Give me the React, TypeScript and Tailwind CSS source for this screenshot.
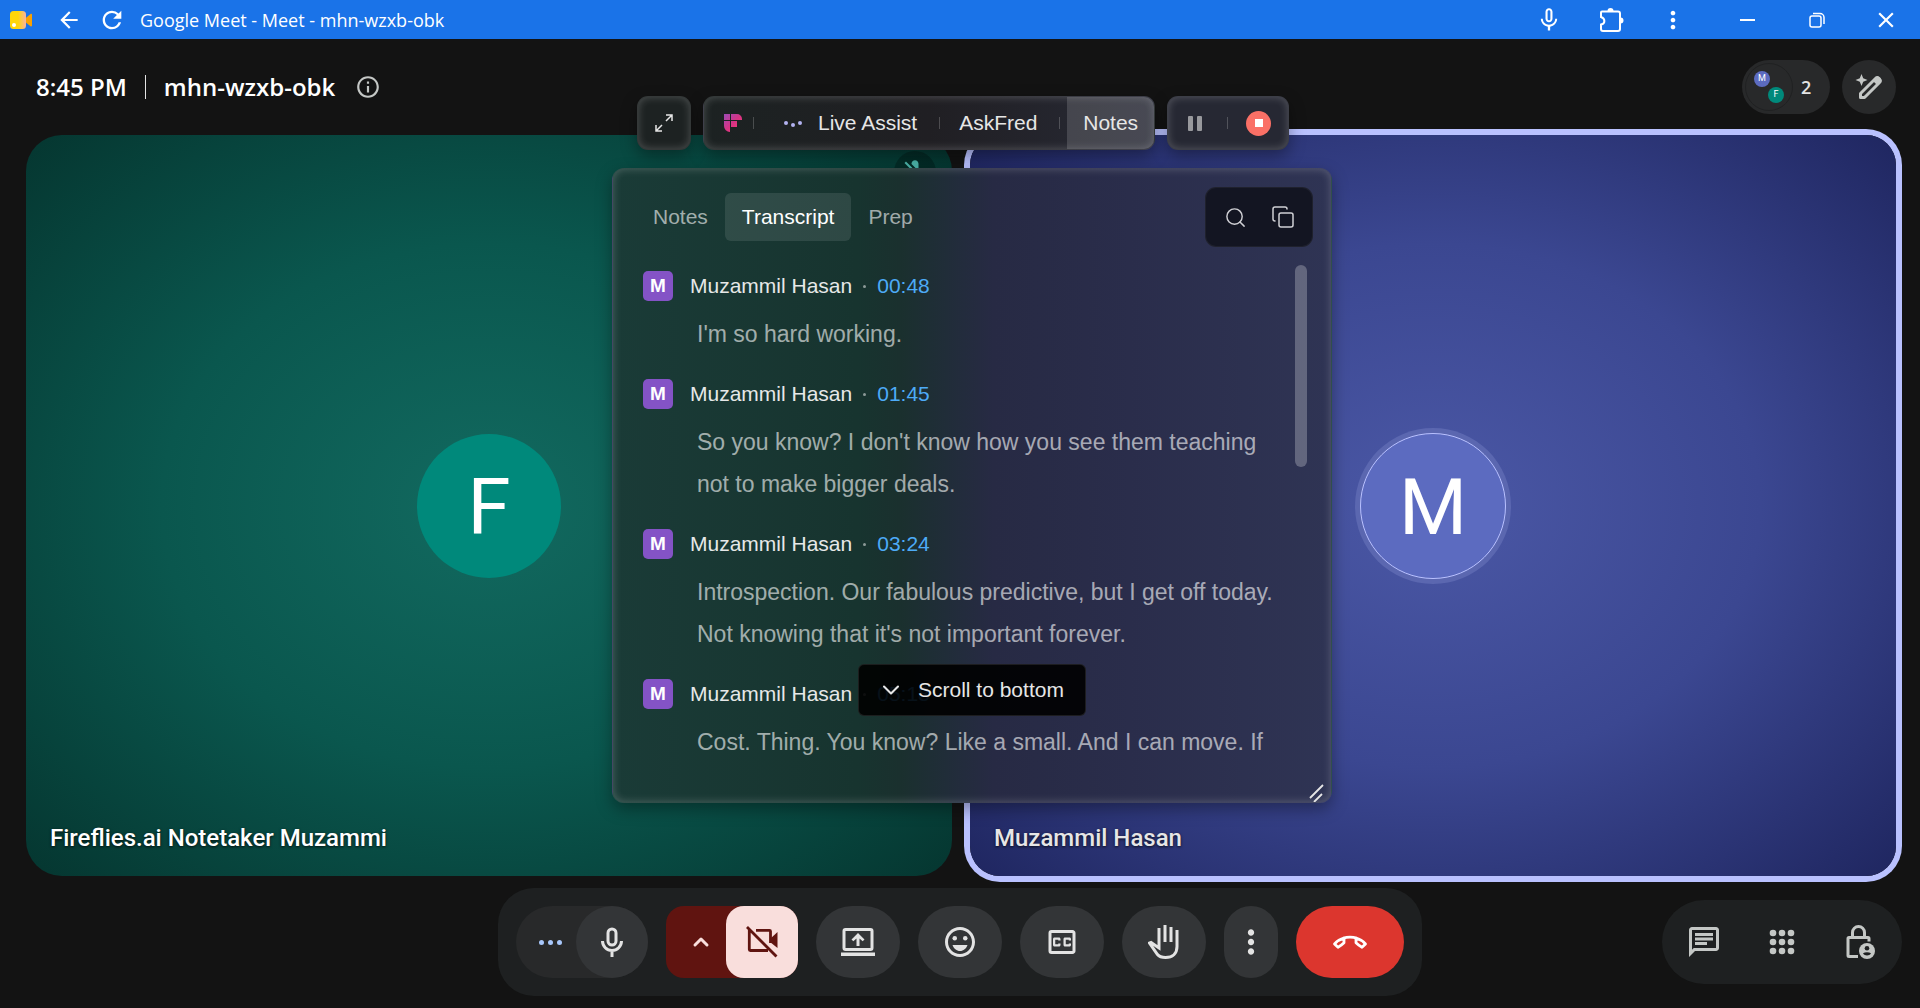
import type { ReactNode } from 'react'
import {
  MdArrowBack,
  MdClose,
  MdMicNone,
  MdMicOff,
  MdMoreVert,
  MdOutlineChat,
  MdOutlineClosedCaption,
  MdOutlineEmojiEmotions,
  MdOutlineInfo,
  MdRefresh,
} from 'react-icons/md'
import { ChevronDown, ChevronUp, Copy, Search } from 'lucide-react'

const messages = [
  { time: '00:48', text: "I'm so hard working." },
  { time: '01:45', text: "So you know? I don't know how you see them teaching not to make bigger deals." },
  {
    time: '03:24',
    text: "Introspection. Our fabulous predictive, but I get off today. Not knowing that it's not important forever.",
  },
  { time: '05:18', text: 'Cost. Thing. You know? Like a small. And I can move. If' },
]

const glass =
  'border border-white/10 shadow-[0_6px_16px_rgba(0,0,0,0.35),inset_0_0_9px_rgba(255,255,255,0.22)]'

function MeetLogo() {
  return (
    <svg viewBox="0 0 22 18" className="h-[18px] w-[22px]">
      <defs>
        <linearGradient id="cam" x1="0" x2="1">
          <stop offset="0.5" stopColor="#ffd60a" />
          <stop offset="1" stopColor="#f9b3a0" />
        </linearGradient>
      </defs>
      <path d="M14 8.5 20.5 3c.6-.5 1.5-.1 1.500.7v10.800c0 .8-.9 1.200-1.500.7L14 10z" fill="#f9a100" />
      <rect width="16" height="18" rx="3.500" fill="url(#cam)" />
      <circle cx="4" cy="14" r="2" fill="#fff" />
    </svg>
  )
}

function ExtensionIcon() {
  return (
    <svg viewBox="0 0 26 26" className="size-[26px]" fill="none" stroke="currentColor" strokeWidth="2">
      <path d="M4 4.500h16a2 2 0 0 1 2 2V22a2 2 0 0 1-2 2H5a2 2 0 0 1-2-2v-4.500c4.500-1 4.500-6 0-7.500V5.500a1 1 0 0 1 1-1z" />
      <path d="M9.500 4a3 3 0 0 1 6 0zM22.500 10.500a3 3 0 0 1 0 6z" fill="currentColor" stroke="none" />
    </svg>
  )
}

function RestoreIcon() {
  return (
    <svg viewBox="0 0 16 16" className="size-4" fill="none" stroke="currentColor" strokeWidth="1.500">
      <rect x="1" y="4" width="11" height="11" rx="2" />
      <path d="M4 1.500h7a4 4 0 0 1 4 4V12" />
    </svg>
  )
}

function MagicPencilIcon() {
  return (
    <svg viewBox="0 0 28 28" className="size-7" fill="currentColor">
      <path d="M6.500 1 8.200 5.300 12.500 7l-4.300 1.700L6.500 13l-1.700-4.300L.5 7l4.300-1.700z" />
      <path
        d="M5.500 24.500v-4L20.500 5.500a2.500 2.500 0 0 1 3.500 0l.5.5a2.500 2.500 0 0 1 0 3.500L9.500 24.500z"
        fill="none"
        stroke="currentColor"
        strokeWidth="3"
        strokeLinejoin="round"
      />
      <path d="m17.500 7.500 5 5 3-3V5l-3-1.500z" />
    </svg>
  )
}

function FirefliesLogo() {
  return (
    <svg viewBox="0 0 18 18" className="size-[18px]">
      <defs>
        <linearGradient id="ff" x1="0" y1="0" x2="1" y2="1">
          <stop stopColor="#9b4bb5" />
          <stop offset="0.5" stopColor="#d63384" />
          <stop offset="1" stopColor="#ff3d73" />
        </linearGradient>
      </defs>
      <path d="M0 0h6v6H0zM7 0h6a5 5 0 0 1 5 5v1H7zM0 7h6v11a6 6 0 0 1-6-6zM7 7h6v6H7z" fill="url(#ff)" />
    </svg>
  )
}

function ExpandIcon() {
  return (
    <svg viewBox="0 0 18 18" className="size-[18px]" fill="none" stroke="#e6e6e6" strokeWidth="1.500">
      <path d="M11 1h6v6M17 1l-6 6M1 11v6h6M1 17l6-6" />
    </svg>
  )
}

function MicIcon() {
  return (
    <svg viewBox="0 0 24 30" className="h-[30px] w-6" fill="none" stroke="currentColor" strokeWidth="3">
      <rect x="8" y="2" width="8" height="16" rx="4" />
      <path d="M2.500 14a9.500 9.500 0 0 0 19 0M12 23.500V30" />
    </svg>
  )
}

function CameraOffIcon() {
  return (
    <svg viewBox="0 0 32 32" className="size-8" fill="none" stroke="currentColor" strokeWidth="2.800">
      <path d="M1 1l29.500 29.500M10 4.300h13.500a1 1 0 0 1 1 1V17M3.300 4v19.500a1 1 0 0 0 1 1H22" />
      <path d="M24 13l7.500-7v16L24 16z" fill="currentColor" stroke="none" />
    </svg>
  )
}

function HandIcon() {
  return (
    <svg viewBox="0 0 32 34" className="h-[34px] w-8" fill="none" stroke="currentColor" strokeWidth="3">
      <path d="M11 3v20l-8-5.500-1.500.5 8 11.500c2 2.500 4.500 3 8 3 7 0 11.500-4 11.500-11V5M17 0v17M23 2v15" />
    </svg>
  )
}

function PresentIcon() {
  return (
    <svg viewBox="0 0 36 30" className="h-[30px] w-9" fill="currentColor">
      <path
        fillRule="evenodd"
        d="M5.500 1h25a3 3 0 0 1 3 3v17a3 3 0 0 1-3 3h-25a3 3 0 0 1-3-3V4a3 3 0 0 1 3-3zM5.500 4v17h25V4z"
      />
      <path d="M1 25.500h34V29H1z" />
      <path d="m18 6 6.500 6.500-1.800 1.800-3.200-2.800V19h-3v-7.500l-3.200 2.800-1.800-1.800z" />
    </svg>
  )
}

function HangUpIcon() {
  return (
    <svg viewBox="0 0 36 16" className="h-4 w-9" fill="none" stroke="#fff" strokeWidth="2.800" strokeLinejoin="round">
      <path d="M12 4.200C9 5 5.500 6.800 2.500 10L6 13.300c2.500-1.300 4.500-3 6-4.500zM24 4.200c3 .8 6.500 2.600 9.500 5.800L30 13.300c-2.500-1.300-4.500-3-6-4.500z" />
      <path d="M11 4.300c4.500-1.500 9.500-1.500 14 0" />
    </svg>
  )
}

function AppsIcon() {
  return (
    <svg viewBox="0 0 26 26" className="size-[26px]" fill="currentColor">
      {[4, 13, 22].map((y) => [4, 13, 22].map((x) => <circle key={`${x}-${y}`} cx={x} cy={y} r="3.300" />))}
    </svg>
  )
}

function LockPersonIcon() {
  return (
    <svg viewBox="0 0 30 34" className="h-[34px] w-[30px]" fill="none" stroke="currentColor" strokeWidth="3">
      <path d="M7.500 12V7.500a6 6 0 0 1 12 0V12" />
      <path d="M24 16.500V13.500a1 1 0 0 0-1-1H4a1 1 0 0 0-1 1v17a1 1 0 0 0 1 1h9" />
      <circle cx="22" cy="26" r="8" fill="currentColor" stroke="none" />
      <circle cx="22" cy="23.300" r="2.300" fill="#1e2021" stroke="none" />
      <path d="M18 28.300c2.200-1.500 5.800-1.500 8 0-1.500 3-6.500 3-8 0z" fill="#1e2021" stroke="none" />
    </svg>
  )
}

function RoundButton({ label, className = 'w-[84px]', children }: { label: string; className?: string; children: ReactNode }) {
  return (
    <button
      aria-label={label}
      className={`flex h-18 items-center justify-center rounded-[36px] bg-[#333537] text-[#e3e3e3] ${className}`}
    >
      {children}
    </button>
  )
}

function TitleBar() {
  return (
    <header className="flex h-[39px] items-center bg-[#1a73e8] text-white">
      <div className="flex flex-1 items-center pl-[10px]">
        <MeetLogo />
        <button aria-label="Back" className="ml-6">
          <MdArrowBack size={26} />
        </button>
        <button aria-label="Reload" className="ml-4">
          <MdRefresh size={28} />
        </button>
        <h1 className="ml-[14px] font-['Open_Sans',sans-serif] text-[18px] leading-6">Google Meet - Meet - mhn-wzxb-obk</h1>
      </div>
      <div className="mr-[9px] flex *:flex *:w-[62px] *:items-center *:justify-center">
        <button aria-label="Microphone"><MdMicNone size={28} /></button>
        <button aria-label="Extensions"><ExtensionIcon /></button>
        <button aria-label="More"><MdMoreVert size={28} /></button>
      </div>
      <div className="flex *:flex *:w-[69px] *:items-center *:justify-center">
        <button aria-label="Minimize"><span className="h-[2px] w-[15px] bg-white" /></button>
        <button aria-label="Restore"><RestoreIcon /></button>
        <button aria-label="Close"><MdClose size={26} /></button>
      </div>
    </header>
  )
}

function MeetingHeader() {
  return (
    <div className="flex h-24 items-center justify-between pr-6 pl-9 text-white">
      <div className="flex items-center font-['Open_Sans',sans-serif] text-[24px] leading-8 font-semibold">
        <span>8:45 PM</span>
        <span className="mx-[18px] h-6 w-px bg-[#e3e3e3]" />
        <span>mhn-wzxb-obk</span>
        <button aria-label="Meeting details" className="ml-5 text-[#c4c7c5]">
          <MdOutlineInfo size={26} />
        </button>
      </div>
      <div className="flex gap-3">
        <button aria-label="Participants" className="flex h-[54px] w-[88px] items-center rounded-full bg-[#28292a] pl-[3px] text-[#e3e3e3]">
          <span className="flex size-12 flex-col justify-center rounded-full border border-[#202122] px-2 text-[9px] text-white">
            <span className="flex size-4 items-center justify-center rounded-full bg-[#5c6bc0]">M</span>
            <span className="flex size-4 items-center justify-center self-end rounded-full bg-[#00897b]">F</span>
          </span>
          <span className="ml-2 font-['Open_Sans',sans-serif] text-lg font-semibold">2</span>
        </button>
        <button aria-label="Effects" className="flex size-[54px] items-center justify-center rounded-full bg-[#28292a] text-[#c4c7c5]">
          <MagicPencilIcon />
        </button>
      </div>
    </div>
  )
}

function Tiles() {
  return (
    <main className="grid flex-1 grid-cols-2 gap-[18px] pr-6 pl-[26px] text-white">
      <section className="relative flex items-center justify-center rounded-[36px] bg-[radial-gradient(ellipse_farthest-corner_at_center,#126a60_0%,#0a574e_50%,#053630_100%)]">
        <div className="flex size-36 items-center justify-center rounded-full bg-[#00897b] pt-1 text-[78px] leading-none">F</div>
        <div className="absolute top-4 right-4 flex size-[42px] items-center justify-center rounded-full bg-black/25 text-[#4db6ac]">
          <MdMicOff size={28} />
        </div>
        <h2 className="absolute bottom-[22px] left-6 text-[24px] leading-8 font-medium [text-shadow:0_1px_3px_rgba(0,0,0,0.8)]">
          Fireflies.ai Notetaker Muzammi
        </h2>
      </section>
      <section className="relative flex items-center justify-center rounded-[30px] bg-[radial-gradient(ellipse_farthest-corner_at_center,#4b58a6_0%,#3b4791_50%,#1f2660_100%)] ring-6 ring-[#b9c1ff]">
        <div className="flex size-39 items-center justify-center rounded-full bg-[#5b67b0]">
          <div className="flex size-[146px] items-center justify-center rounded-full border border-[#b9c1ff] bg-[#5c6bc0] pt-1 text-[78px] leading-none">
            M
          </div>
        </div>
        <h2 className="absolute bottom-[22px] left-6 text-[24px] leading-8 font-medium text-[#e6e6e6] [text-shadow:0_1px_3px_rgba(0,0,0,0.8)]">
          Muzammil Hasan
        </h2>
      </section>
    </main>
  )
}

function Controls() {
  return (
    <footer className="grid grid-cols-[1fr_auto_1fr] items-center px-[18px] py-3">
      <div />
      <div className="flex gap-[18px] rounded-[36px] bg-[#1e2021] p-[18px]">
        <div className="flex h-18 w-33 rounded-[36px] bg-[#28292a]">
          <button aria-label="Audio settings" className="flex w-15 items-center justify-center gap-1 pl-2 *:size-[5px] *:rounded-full *:bg-[#a8c7fa]">
            <span /><span /><span />
          </button>
          <RoundButton label="Turn off microphone" className="w-18"><MicIcon /></RoundButton>
        </div>
        <div className="flex h-18 w-33 rounded-[18px] bg-[#601410] text-[#f9dedc]">
          <button aria-label="Video settings" className="flex w-15 items-center justify-center pl-[10px]">
            <ChevronUp size={24} strokeWidth={3} />
          </button>
          <button aria-label="Turn on camera" className="flex w-18 items-center justify-center rounded-[18px] bg-[#f9dedc] text-[#601410]">
            <CameraOffIcon />
          </button>
        </div>
        <RoundButton label="Present now"><PresentIcon /></RoundButton>
        <RoundButton label="Send a reaction"><MdOutlineEmojiEmotions size={36} /></RoundButton>
        <RoundButton label="Turn on captions"><MdOutlineClosedCaption size={36} /></RoundButton>
        <RoundButton label="Raise hand"><HandIcon /></RoundButton>
        <RoundButton label="More options" className="w-[54px]"><MdMoreVert size={38} /></RoundButton>
        <button aria-label="Leave call" className="flex h-18 w-27 items-center justify-center rounded-[36px] bg-[#dc362e]">
          <HangUpIcon />
        </button>
      </div>
      <div className="flex h-21 w-60 gap-[6px] justify-self-end rounded-[42px] bg-[#1e2021] p-[6px] text-[#c4c7c5] *:flex *:flex-1 *:items-center *:justify-center">
        <button aria-label="Chat"><MdOutlineChat size={36} /></button>
        <button aria-label="Meeting tools"><AppsIcon /></button>
        <button aria-label="Host controls"><LockPersonIcon /></button>
      </div>
    </footer>
  )
}

function Divider() {
  return <span className="h-3 w-px bg-white/20" />
}

function AssistantToolbar() {
  return (
    <div className="ml-[25px] flex h-[54px] gap-3 text-[#e6e6e6]">
      <button aria-label="Expand" className={`flex w-[54px] items-center justify-center rounded-[11px] bg-[#1d2222] ${glass}`}>
        <ExpandIcon />
      </button>
      <div className={`flex w-[452px] items-center overflow-hidden rounded-[11px] bg-linear-to-r from-[#1c2222] via-[#201f23] to-[#282a36] ${glass}`}>
        <button aria-label="Fireflies" className="pr-[11px] pl-5"><FirefliesLogo /></button>
        <Divider />
        <button className="flex items-center gap-4 pr-[22px] pl-[30px]">
          <span className="flex gap-[3px] *:size-1 *:rounded-full *:bg-[#b3b2f0]">
            <span /><span className="translate-y-[2px]" /><span />
          </span>
          Live Assist
        </button>
        <Divider />
        <button className="pr-[22px] pl-[19px]">AskFred</button>
        <Divider />
        <button className="ml-[7px] flex-1 self-stretch bg-white/15">Notes</button>
      </div>
      <div className={`flex w-[122px] items-center rounded-[11px] bg-[#262833] ${glass}`}>
        <button aria-label="Pause" className="flex gap-1 pr-[25px] pl-5 *:h-[15px] *:w-[5px] *:rounded-[1px] *:bg-[#98999d]">
          <span /><span />
        </button>
        <Divider />
        <button aria-label="Stop" className="ml-[18px] flex size-[25px] items-center justify-center rounded-full bg-[#fa7066]">
          <span className="size-2 bg-white" />
        </button>
      </div>
    </div>
  )
}

function TranscriptPanel() {
  return (
    <div
      className={`relative flex h-[635px] flex-col rounded-xl bg-[linear-gradient(to_right,#1a3b37_0%,#17342f_34%,#1a302e_40%,#272a44_53%,#2a2d4b_72%,#2f3454_100%)] pt-[18px] ${glass}`}
    >
      <div className="flex items-center justify-between pr-[18px] pl-[23px]">
        <nav className="flex text-white/60 *:h-12 *:rounded-md *:px-[17px]">
          <button>Notes</button>
          <button className="bg-white/10 text-white">Transcript</button>
          <button>Prep</button>
        </nav>
        <div className="flex h-15 w-27 items-center justify-center gap-6 rounded-[11px] border border-white/5 bg-[#131522] text-[#d0d0d5]">
          <button aria-label="Search"><Search size={23} strokeWidth={1.5} /></button>
          <button aria-label="Copy"><Copy size={24} strokeWidth={1.5} /></button>
        </div>
      </div>

      <div className="mt-[18px] flex h-[498px] justify-between overflow-hidden pr-6 pl-[30px]">
        <ul className="w-[650px] space-y-6 pt-[6px]">
          {messages.map((m) => (
            <li key={m.time}>
              <div className="flex h-[30px] items-center">
                <span className="flex size-[30px] items-center justify-center rounded-[5px] bg-[#8453c6] text-[19px] font-bold text-white">M</span>
                <span className="ml-[17px] text-[#e6e8e8]">Muzammil Hasan</span>
                <span className="mx-[11px] size-[3px] rounded-full bg-white/50" />
                <span className="text-[#4dabf7]">{m.time}</span>
              </div>
              <p className="mt-3 pl-[54px] text-[23px] leading-[42px] text-white/60">{m.text}</p>
            </li>
          ))}
        </ul>
        <div className="h-[202px] w-3 shrink-0 rounded-full bg-white/25" />
      </div>

      <button className="absolute bottom-[86px] left-1/2 flex h-[52px] w-[228px] -translate-x-1/2 items-center gap-[13px] rounded-md border border-white/10 bg-black/90 pl-[18px] text-[#e6e6e6]">
        <ChevronDown size={28} strokeWidth={1.8} />
        Scroll to bottom
      </button>
      <svg viewBox="0 0 16 18" className="absolute right-[6px] bottom-0 h-[18px] w-4" stroke="#e6e6e6" strokeWidth="1.800">
        <path d="M1 14 14 1M5 18l8-8" />
      </svg>
    </div>
  )
}

export default function App() {
  return (
    <div className="relative flex min-h-screen flex-col bg-[#131313] font-[Roboto,sans-serif]">
      <TitleBar />
      <MeetingHeader />
      <Tiles />
      <Controls />

      {/* floating assistant windows */}
      <div className="absolute inset-x-0 top-24 flex justify-center pl-6 font-['Liberation_Sans',Arial,sans-serif] text-[21px] leading-6">
        <div className="flex w-[720px] flex-col gap-[18px]">
          <AssistantToolbar />
          <TranscriptPanel />
        </div>
      </div>
    </div>
  )
}
